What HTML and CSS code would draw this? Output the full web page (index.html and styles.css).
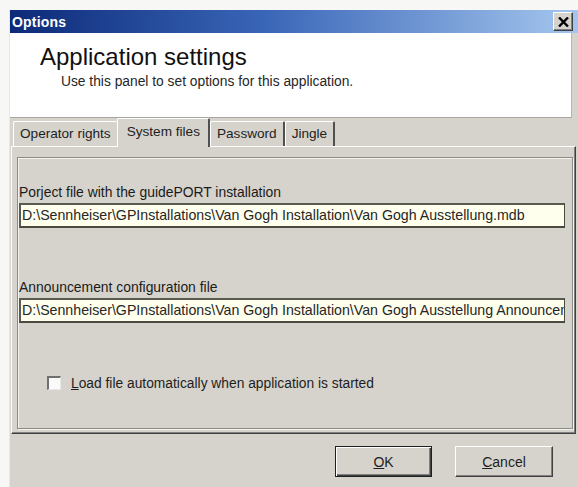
FILE: index.html
```html
<!DOCTYPE html>
<html>
<head>
<meta charset="utf-8">
<title>Options</title>
<link rel="stylesheet" href="styles.css">
</head>
<body>
<div class="window">
  <div class="titlebar">
    <span class="title">Options</span>
    <span class="close-btn">
      <svg width="11" height="10" viewBox="0 0 11 10"><path d="M1 0.5 L10 9.5 M10 0.5 L1 9.5" stroke="#000" stroke-width="2.4" fill="none"/></svg>
    </span>
  </div>
  <div class="header">
    <div class="header-title">Application settings</div>
    <div class="header-sub">Use this panel to set options for this application.</div>
  </div>
  <div class="tabctl">
    <div class="tabstrip">
      <div class="tab">Operator rights</div>
      <div class="tab tab-active">System files</div>
      <div class="tab">Password</div>
      <div class="tab">Jingle</div>
    </div>
    <div class="page">
      <div class="panel">
        <div class="label label-first">Porject file with the guidePORT installation</div>
        <input class="textbox" type="text" readonly value="D:\Sennheiser\GPInstallations\Van Gogh Installation\Van Gogh Ausstellung.mdb">
        <div class="label label-second">Announcement configuration file</div>
        <input class="textbox" type="text" readonly value="D:\Sennheiser\GPInstallations\Van Gogh Installation\Van Gogh Ausstellung Announcement.xml">
        <div class="check-row">
          <span class="checkbox"></span>
          <span class="check-label"><u>L</u>oad file automatically when application is started</span>
        </div>
      </div>
    </div>
  </div>
  <div class="buttons">
    <div class="btn btn-default"><span class="btn-inner"><u>O</u>K</span></div>
    <div class="btn"><span class="btn-inner"><u>C</u>ancel</span></div>
  </div>
</div>
</body>
</html>
```
FILE: styles.css
```css
html, body {
  margin: 0;
  padding: 0;
}
body {
  background: #f7f7f6;
  font-family: "Liberation Sans", Arial, sans-serif;
  font-size: 14px;
  color: #1a1a1a;
  overflow: hidden;
}
.window {
  margin: 10px 0 0 9px;
  width: 568px;
  height: 477px;
  background: #d6d3cc;
  border-left: 1px solid #e9e7e2;
  display: flex;
  flex-direction: column;
}
.titlebar {
  height: 23px;
  background: linear-gradient(to right, #0c2a78 0%, #3a66b8 45%, #a4c6ee 100%);
  display: flex;
  align-items: center;
  justify-content: space-between;
  padding: 0 5px 0 2px;
}
.title {
  color: #fff;
  font-weight: bold;
  font-size: 14px;
  letter-spacing: 0.2px;
}
.close-btn {
  width: 18px;
  height: 17px;
  background: #d6d3cc;
  border-top: 1px solid #fff;
  border-left: 1px solid #fff;
  border-right: 1px solid #404040;
  border-bottom: 1px solid #404040;
  box-shadow: inset -1px -1px 0 #808080;
  display: flex;
  align-items: center;
  justify-content: center;
}
.header {
  height: 85px;
  margin-right: 6px;
  background: #fff;
  border-bottom: 1px solid #a8a6a0;
  border-right: 1px solid #b8b6b0;
  padding-left: 30px;
  box-sizing: border-box;
}
.header-title {
  font-size: 24px;
  line-height: 28px;
  margin-top: 10px;
  color: #111;
}
.header-sub {
  font-size: 13.8px;
  line-height: 16px;
  margin-top: 3px;
  margin-left: 21px;
  color: #262626;
}
.tabctl {
  margin: 0 2px 0 1px;
  display: flex;
  flex-direction: column;
}
.tabstrip {
  height: 28px;
  display: flex;
  align-items: flex-end;
  padding-left: 2px;
}
.tab {
  height: 24px;
  line-height: 24px;
  padding: 0 6px 0 6px;
  font-size: 13.6px;
  border-top: 1px solid #fff;
  border-left: 1px solid #fff;
  border-right: 2px solid #505050;
  border-top-left-radius: 2px;
  border-top-right-radius: 2px;
  background: #d6d3cc;
  color: #1e1e1e;
}
.tab:first-child {
  border-right: none;
}
.tab-active {
  height: 28px;
  line-height: 26px;
  margin-bottom: -1px;
  padding: 0 8px 0 9px;
  position: relative;
  z-index: 1;
}
.page {
  height: 288px;
  box-sizing: border-box;
  border-top: 1px solid #fff;
  border-left: 1px solid #fff;
  border-right: 1px solid #404040;
  border-bottom: 1px solid #404040;
  box-shadow: inset -1px -1px 0 #808080;
  padding: 10px 2px 4px 5px;
  display: flex;
  flex-direction: column;
}
.panel {
  flex: 1;
  border: 1px solid #8c8a84;
  box-shadow: 1px 1px 0 #f4f3f0, inset 1px 1px 0 #f4f3f0;
  display: flex;
  flex-direction: column;
}
.label {
  line-height: 16px;
  font-size: 13.9px;
  padding-left: 1px;
}
.label-first {
  margin-top: 26px;
}
.label-second {
  margin-top: 51px;
}
.textbox {
  display: block;
  margin: 3px 0 0 1px;
  width: 546px;
  height: 25px;
  box-sizing: border-box;
  background: #ffffee;
  border-top: 2px solid #5a5a50;
  border-left: 2px solid #5a5a50;
  border-right: 1px solid #4a4a40;
  border-bottom: 2px solid #4a4a40;
  padding: 0 0 2px 1px;
  font-family: "Liberation Sans", Arial, sans-serif;
  font-size: 14.2px;
  color: #262626;
  outline: none;
}
.check-row {
  margin-top: 51px;
  margin-left: 29px;
  height: 18px;
  display: flex;
  align-items: center;
  gap: 10px;
}
.checkbox {
  width: 11px;
  height: 11px;
  background: #fafafa;
  border-top: 2px solid #707070;
  border-left: 2px solid #707070;
  border-right: 1px solid #e8e8e8;
  border-bottom: 1px solid #e8e8e8;
}
.check-label {
  font-size: 13.8px;
  color: #1e1e1e;
}
.buttons {
  display: flex;
  justify-content: flex-end;
  gap: 23px;
  padding: 12px 25px 0 0;
}
.btn {
  width: 98px;
  height: 31px;
  box-sizing: border-box;
  background: #d6d3cc;
  border-top: 1px solid #fff;
  border-left: 1px solid #fff;
  border-right: 1px solid #404040;
  border-bottom: 1px solid #404040;
  box-shadow: inset -1px -1px 0 #808080;
  display: flex;
  align-items: center;
  justify-content: center;
  font-size: 14px;
  color: #1e1e1e;
}
.btn-default {
  width: 97px;
  border: 1px solid #202020;
  box-shadow: inset 1px 1px 0 #fff, inset -1px -1px 0 #404040, inset -2px -2px 0 #808080;
}
.btn-inner {
  padding-top: 1px;
}
```
